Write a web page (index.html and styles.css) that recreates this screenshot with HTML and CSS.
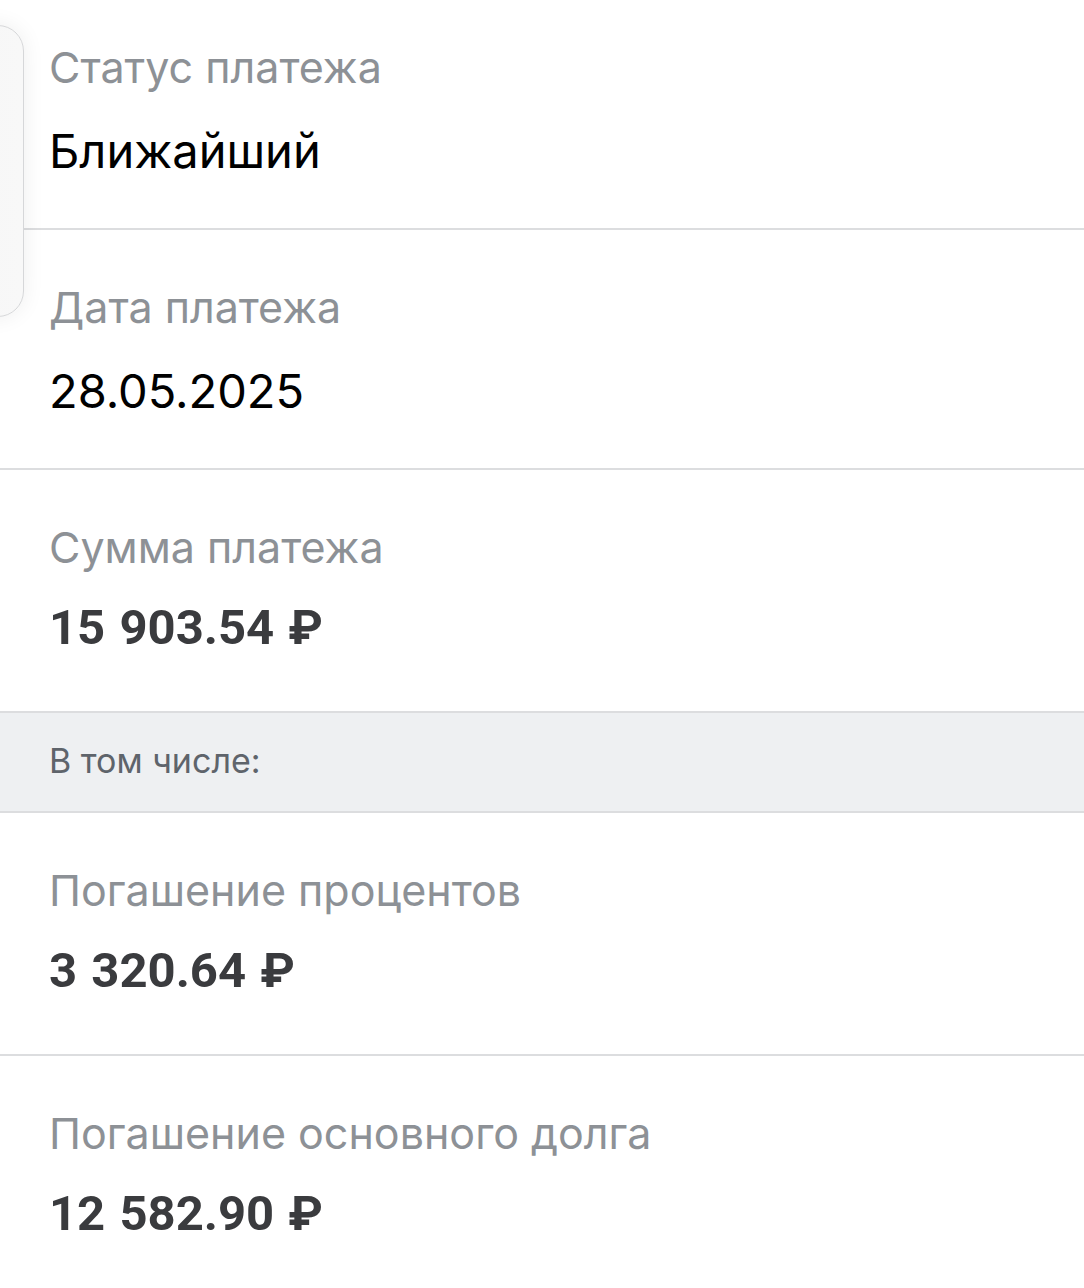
FILE: index.html
```html
<!doctype html>
<html lang="ru">
<head>
<meta charset="utf-8" />
<title>Платёж</title>
<link rel="stylesheet" href="styles.css">
</head>
<body>

<div class="peek"></div>

<section class="details">
	<div class="row first">
		<div class="label">Статус платежа</div>
		<div class="value">Ближайший</div>
	</div>
	<div class="row">
		<div class="label">Дата платежа</div>
		<div class="value">28.05.2025</div>
	</div>
	<div class="row money">
		<div class="label">Сумма платежа</div>
		<div class="value amount">15 903.54 ₽</div>
	</div>

	<div class="band">В том числе:</div>

	<div class="row money">
		<div class="label">Погашение процентов</div>
		<div class="value amount">3 320.64 ₽</div>
	</div>
	<div class="row money last">
		<div class="label">Погашение основного долга</div>
		<div class="value amount">12 582.90 ₽</div>
	</div>
</section>

</body>
</html>
```

FILE: styles.css
```css
:root {
	--label: #8d9196;
	--line: #dcdddf;
	--amount: #3a3b3e;
	font-family: Inter, "Noto Sans", sans-serif;
}

body, html {
	margin: 0;
	padding: 0;
	background: #fff;
}

/* card peeking in from the left edge */
.peek {
	position: absolute;
	left: -300px;
	top: 25px;
	width: 322px;
	height: 290px;
	border: 1px solid #d6d7d9;
	border-radius: 26px;
	background: linear-gradient(to right, #f2f2f3, #f8f8f8);
	box-shadow: 0 0 22px rgba(0, 0, 0, 0.07);
	z-index: 2;
}

.details {
	margin-top: -10px;
}

.row {
	padding: 53px 0 49px 49px;
	border-bottom: 2px solid var(--line);
}

.row.money {
	padding-bottom: 55px;
}

.row.last {
	border-bottom: none;
}

.label {
	font-size: 43px;
	line-height: 48px;
	color: var(--label);
}

.value {
	margin-top: 32px;
	font-size: 47px;
	line-height: 56px;
	color: #000;
}

.value.amount {
	margin-top: 29px;
	font-family: Roboto, "Liberation Sans", sans-serif;
	font-weight: 700;
	font-size: 49px;
	word-spacing: 2px;
	color: var(--amount);
}

.band {
	padding-left: 49px;
	height: 98px;
	line-height: 96px;
	font-size: 34px;
	color: #5e646b;
	background: #eef0f2;
	border-bottom: 2px solid var(--line);
}
```
